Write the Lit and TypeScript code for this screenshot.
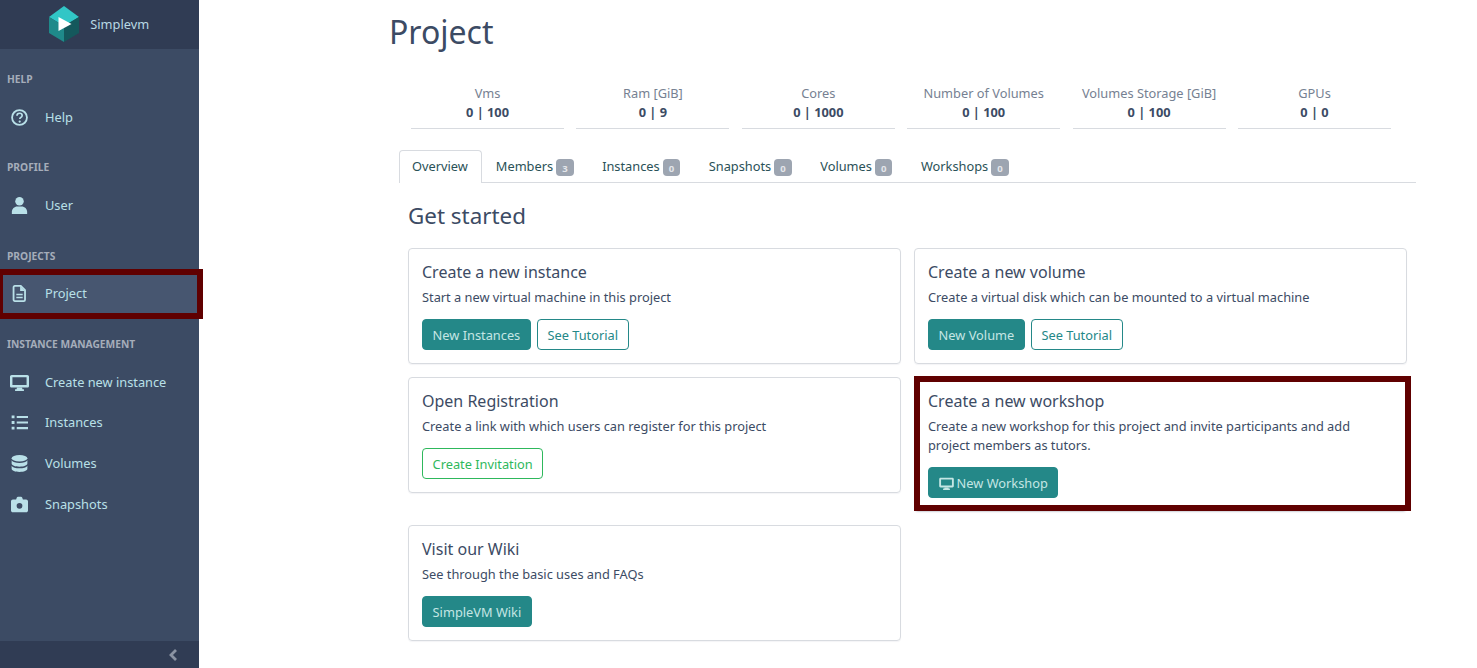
import { LitElement, html, css, svg } from 'lit';
import { customElement } from 'lit/decorators.js';

const icons = {
  help: svg`<circle cx="8" cy="8" r="7" fill="none" stroke="currentColor" stroke-width="1.7"/><path d="M5.600 6.400c0-1.500 1.100-2.400 2.500-2.400s2.400.9 2.400 2.100c0 1-.6 1.500-1.300 1.900-.7.4-.9.700-.9 1.300" fill="none" stroke="currentColor" stroke-width="1.600"/><circle cx="8.200" cy="11.800" r="1.050" fill="currentColor"/>`,
  user: svg`<circle cx="8" cy="4" r="4" fill="currentColor"/><path d="M.8 16v-1.800C.8 11.300 3.100 9 6 9h4c2.900 0 5.200 2.300 5.200 5.200V16z" fill="currentColor"/>`,
  file: svg`<path d="M3.600.9h5.600l4 4v9c0 .7-.5 1.200-1.200 1.200H3.600c-.7 0-1.200-.5-1.200-1.200V2.100c0-.7.5-1.200 1.200-1.200z" fill="none" stroke="currentColor" stroke-width="1.700"/><path d="M8.600 1v4.600h4.400" fill="currentColor"/><path d="M5 9h6M5 11.800h6" stroke="currentColor" stroke-width="1.500"/>`,
  desktop: svg`<path d="M1.600 .8h14.800c.9 0 1.600.7 1.600 1.600v8.800c0 .9-.7 1.600-1.600 1.600H1.600c-.9 0-1.600-.7-1.600-1.600V2.400C0 1.500.7.800 1.600.8zm.7 2.300v7.300h13.400V3.100z" fill="currentColor" fill-rule="evenodd"/><path d="M6.600 12.800h4.800l.4 1.500h1.400V16H4.800v-1.700h1.400z" fill="currentColor"/>`,
  list: svg`<path d="M.6 1.400h2.700v2.700H.6zM.6 6.700h2.700v2.700H.6zM.6 12h2.700v2.700H.6z" fill="currentColor"/><path d="M5.400 2.800H16M5.400 8H16M5.400 13.300H16" stroke="currentColor" stroke-width="1.900"/>`,
  database: svg`<ellipse cx="8" cy="3" rx="7.400" ry="3" fill="currentColor"/><path d="M.6 5c1 1.700 3.800 2.500 7.400 2.500s6.400-.8 7.400-2.500v3c0 1.700-3.300 3-7.400 3S.6 9.700.6 8z" fill="currentColor"/><path d="M.6 10c1 1.700 3.800 2.500 7.400 2.500s6.400-.8 7.400-2.500v3c0 1.700-3.300 3-7.400 3S.6 14.700.6 13z" fill="currentColor"/>`,
  camera: svg`<path d="M1.800 3.200h3l.7-1.700c.2-.5.600-.8 1.100-.8h2.800c.5 0 .9.3 1.100.8l.7 1.700h3c1 0 1.800.8 1.800 1.800v8.600c0 1-.8 1.800-1.800 1.800H1.800C.8 15.400 0 14.600 0 13.600V5c0-1 .8-1.800 1.800-1.800zM8 11.900a2.700 2.700 0 1 0 0-5.400 2.700 2.700 0 0 0 0 5.400z" fill="currentColor" fill-rule="evenodd"/>`,
};

const icon = (name: keyof typeof icons, cls = 'ico') =>
  html`<svg class=${cls} viewBox=${name === 'desktop' ? '0 0 18 16' : '0 0 16 16'}>${icons[name]}</svg>`;

const nav = [
  { title: 'Help', items: [{ label: 'Help', icon: 'help' }] },
  { title: 'Profile', items: [{ label: 'User', icon: 'user' }] },
  { title: 'Projects', items: [{ label: 'Project', icon: 'file', active: true }] },
  {
    title: 'Instance Management',
    items: [
      { label: 'Create new instance', icon: 'desktop' },
      { label: 'Instances', icon: 'list' },
      { label: 'Volumes', icon: 'database' },
      { label: 'Snapshots', icon: 'camera' },
    ],
  },
];

const stats = [
  ['Vms', '0 | 100'],
  ['Ram [GiB]', '0 | 9'],
  ['Cores', '0 | 1000'],
  ['Number of Volumes', '0 | 100'],
  ['Volumes Storage [GiB]', '0 | 100'],
  ['GPUs', '0 | 0'],
];

const tabs = [
  ['Members', '3'],
  ['Instances', '0'],
  ['Snapshots', '0'],
  ['Volumes', '0'],
  ['Workshops', '0'],
];

@customElement('app-root')
export class AppRoot extends LitElement {
  static styles = css`
    :host {
      display: flex;
      height: 668px;
      overflow: hidden;
      background: #fff;
      font: 12.800px/19.200px 'Noto Sans', sans-serif;
      color: #3c4b64;
    }

    .sidebar {
      flex: 0 0 199px;
      display: flex;
      flex-direction: column;
      background: #3c4b64;
      color: #b9e0e8;
    }

    .brand {
      flex: 0 0 49px;
      display: flex;
      align-items: center;
      justify-content: center;
      gap: 11.500px;
      padding-right: 1px;
      background: #303c54;
      color: #b9d9e4;
    }

    .logo {
      width: 30px;
      height: 36px;
      margin-top: -1px;
    }

    .nav {
      flex: 1;
      padding-top: 21px;
    }

    .nav-title {
      height: 18px;
      margin-bottom: 9px;
      padding-left: 7px;
      font-size: 10.240px;
      line-height: 18px;
      font-weight: 700;
      color: #a5adba;
      text-transform: uppercase;
      white-space: nowrap;
    }

    .section {
      margin-bottom: 20.600px;
    }

    .item {
      position: relative;
      display: flex;
      align-items: center;
      height: 40.700px;
    }

    .item-icon {
      flex: 0 0 45px;
      display: flex;
      justify-content: center;
      padding-right: 6px;
      box-sizing: border-box;
    }

    .ico {
      width: 17px;
      height: 17px;
      display: block;
    }

    .item .desktop {
      width: 19px;
      height: 17px;
    }

    .item.active {
      background: #475670;
    }

    .item.active::after {
      content: '';
      position: absolute;
      left: 0;
      right: -4px;
      top: -5px;
      bottom: -5px;
      border: solid #600000;
      border-width: 6px 6px 6px 3px;
      z-index: 2;
    }

    .toggler {
      flex: 0 0 27px;
      display: flex;
      align-items: center;
      justify-content: flex-end;
      padding-right: 21px;
      background: #303c54;
    }

    .toggler svg {
      width: 10px;
      height: 12px;
    }

    main {
      flex: 1;
      min-width: 0;
      padding: 11px 61px 0 190px;
    }

    h1 {
      margin: 0 0 32px;
      font-size: 32px;
      line-height: 41px;
      font-weight: 400;
    }

    .stats {
      display: grid;
      grid-template-columns: repeat(6, 1fr);
      gap: 12.400px;
      margin: 0 25px 0 22px;
    }

    .stat {
      height: 44px;
      text-align: center;
      border-bottom: 1px solid #d8dbe0;
    }

    .stat span {
      display: block;
      color: #768192;
    }

    .stat b {
      display: block;
      font-weight: 700;
    }

    .tabs {
      display: flex;
      height: 33px;
      box-sizing: border-box;
      margin: 21px 0 0 10px;
      border-bottom: 1px solid #d8dbe0;
    }

    .tab {
      display: flex;
      align-items: center;
      gap: 3px;
      height: 33px;
      padding: 0 13.500px 0 13px;
      color: #2a5157;
      border: 1px solid transparent;
      border-bottom: 0;
      box-sizing: border-box;
      white-space: nowrap;
    }

    .tab.active {
      padding: 0 13px 0 12px;
      background: #fff;
      border-color: #d8dbe0;
      border-radius: 4px 4px 0 0;
    }

    .badge {
      display: inline-block;
      height: 17px;
      padding: 0 6px;
      border-radius: 4px;
      background: #9da5b1;
      color: #e4e6ea;
      font-size: 9.600px;
      line-height: 19px;
      font-weight: 700;
      text-align: center;
    }

    .panel {
      padding: 0 9px 0 19px;
    }

    h2 {
      margin: 18px 0 17px;
      font-size: 22.400px;
      line-height: 30px;
      font-weight: 400;
    }

    .cards {
      display: grid;
      grid-template-columns: 493px 493px;
      column-gap: 13px;
      row-gap: 12.800px;
      align-items: start;
    }

    .card {
      position: relative;
      border: 1px solid #d8dbe0;
      border-radius: 4px;
      padding: 13px;
      box-shadow: 0 1px 1px rgba(60, 75, 100, 0.06);
    }

    .card.marked::after {
      content: '';
      position: absolute;
      left: -1px;
      right: -5px;
      top: -2px;
      bottom: 0;
      border: 6px solid #600000;
    }

    .card h3 {
      margin: 0;
      font-size: 16px;
      line-height: 20px;
      font-weight: 400;
    }

    .card p {
      margin: 6px 0 12px;
    }

    .btns {
      display: flex;
      gap: 6px;
    }

    .btn {
      display: inline-flex;
      align-items: center;
      height: 31px;
      padding: 1px 9.600px 0;
      border: 1px solid #248888;
      border-radius: 4px;
      box-sizing: border-box;
      background: #248888;
      color: #c4e6e4;
      white-space: nowrap;
    }

    .btn.outline {
      background: #fff;
      color: #248888;
    }

    .btn.green {
      background: #fff;
      border-color: #2eb85c;
      color: #2eb85c;
    }

    .btn .ico {
      width: 15px;
      height: 13px;
      margin-right: 3px;
    }
  `;

  renderCard(title: string, text: unknown, buttons: unknown, marked = false) {
    return html`<div class="card ${marked ? 'marked' : ''}">
      <h3>${title}</h3>
      <p>${text}</p>
      <div class="btns">${buttons}</div>
    </div>`;
  }

  render() {
    return html`
      <aside class="sidebar">
        <div class="brand">
          <svg class="logo" viewBox="0 0 30 36">
            <path d="M15 0 30 11 15 20 0 11z" fill="#31c6c6" />
            <path d="M0 11 15 20v16L0 27z" fill="#1f8a8a" />
            <path d="M30 11 15 20v16l15-9z" fill="#14585c" />
            <path d="M9.500 11 22.500 18 9.500 25z" fill="#fff" />
          </svg>
          <span>Simplevm</span>
        </div>
        <div class="nav">
          ${nav.map(
            (s) => html`<div class="section">
              <div class="nav-title">${s.title}</div>
              ${s.items.map(
                (i: any) => html`<div class="item ${i.active ? 'active' : ''}">
                  <span class="item-icon">${icon(i.icon, i.icon === 'desktop' ? 'ico desktop' : 'ico')}</span>
                  ${i.label}
                </div>`
              )}
            </div>`
          )}
        </div>
        <div class="toggler">
          <svg viewBox="0 0 10 12"><path d="M8 1 3 6l5 5" fill="none" stroke="#8a93a3" stroke-width="2.800" /></svg>
        </div>
      </aside>
      <main>
        <h1>Project</h1>
        <div class="stats">
          ${stats.map(([k, v]) => html`<div class="stat"><span>${k}</span><b>${v}</b></div>`)}
        </div>
        <div class="tabs">
          <div class="tab active">Overview</div>
          ${tabs.map(([k, v]) => html`<div class="tab">${k}<span class="badge">${v}</span></div>`)}
        </div>
        <div class="panel">
          <h2>Get started</h2>
          <div class="cards">
            ${this.renderCard(
              'Create a new instance',
              'Start a new virtual machine in this project',
              html`<span class="btn">New Instances</span><span class="btn outline">See Tutorial</span>`
            )}
            ${this.renderCard(
              'Create a new volume',
              'Create a virtual disk which can be mounted to a virtual machine',
              html`<span class="btn">New Volume</span><span class="btn outline">See Tutorial</span>`
            )}
            ${this.renderCard(
              'Open Registration',
              'Create a link with which users can register for this project',
              html`<span class="btn green">Create Invitation</span>`
            )}
            ${this.renderCard(
              'Create a new workshop',
              'Create a new workshop for this project and invite participants and add project members as tutors.',
              html`<span class="btn">${icon('desktop')}New Workshop</span>`,
              true
            )}
            ${this.renderCard(
              'Visit our Wiki',
              'See through the basic uses and FAQs',
              html`<span class="btn">SimpleVM Wiki</span>`
            )}
          </div>
        </div>
      </main>
    `;
  }
}
